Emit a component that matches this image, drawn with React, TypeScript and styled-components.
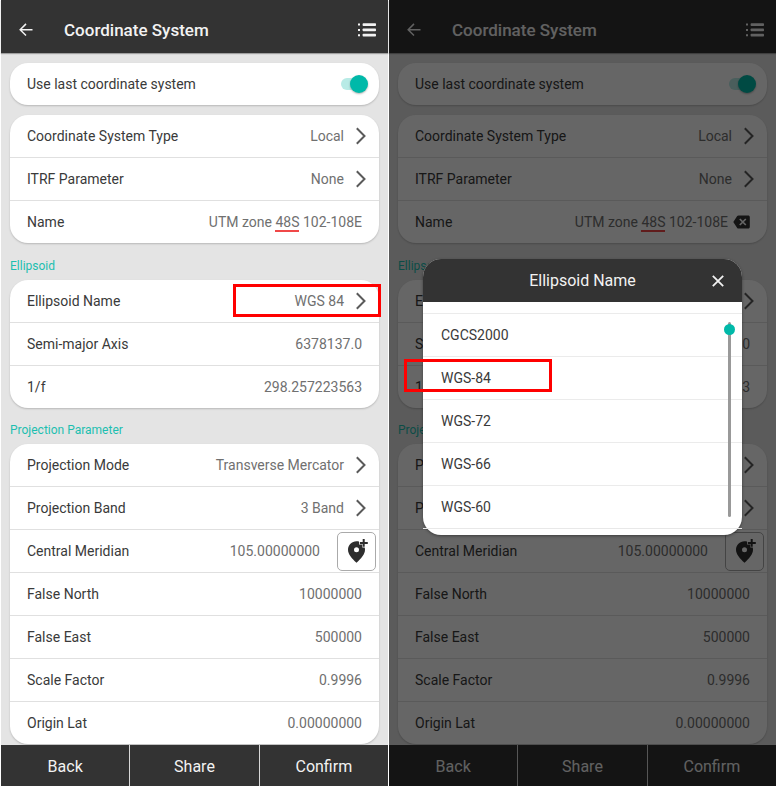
import React, { useId, useState } from "react";
import styled, { createGlobalStyle } from "styled-components";

const GlobalStyle = createGlobalStyle`
  *, *::before, *::after { box-sizing: border-box; }
  body {
    margin: 0;
    background: #fff;
    color: #3a3a3a;
    font-family: Roboto, "Liberation Sans", sans-serif;
    font-size: 14px;
  }
  button, input { font: inherit; color: inherit; }
  button { padding: 0; border: 0; background: none; cursor: pointer; }
  svg { display: block; flex: none; }
`;

const Screens = styled.main`
  display: grid;
  grid-template-columns: 1fr 1fr;
  gap: 1px;
  padding-left: 1px;
  min-height: 100vh;
`;

const Phone = styled.section`
  position: relative;
  display: flex;
  flex-direction: column;
  min-width: 0;
  background: #e4e4e4;
`;

const TopBar = styled.header`
  display: flex;
  align-items: center;
  height: 53px;
  padding: 7px 12px 0 18px;
  background: #333;
  color: #f2f2f2;
  box-shadow: 0 1px 1px rgba(0, 0, 0, 0.3);
`;

const Title = styled.h1`
  flex: 1;
  margin: 0 0 0 31px;
  font-size: 17px;
  line-height: 20px;
  font-weight: 500;
`;

const Content = styled.div`
  flex: 1;
  padding: 10px 9px 1px;
`;

const Card = styled.div`
  border-radius: 18px;
  background: #fff;
  box-shadow: 0 1px 2px rgba(0, 0, 0, 0.2);

  & + & { margin-top: 10px; }
`;

const SectionTitle = styled.h2`
  margin: 0;
  padding: 15px 0 6px;
  font-size: 12px;
  line-height: 16px;
  font-weight: 400;
  color: #1dbfb0;

  & ~ & { padding-top: 14px; }
`;

const Row = styled.div<{ $end?: number }>`
  position: relative;
  display: flex;
  align-items: center;
  min-height: 42px;
  padding: 0 ${(p) => p.$end ?? 17}px 0 17px;

  & + & {
    min-height: 43px;
    border-top: 1px solid #e0e0e0;
  }
`;

const Label = styled.label`
  flex: none;
  line-height: 20px;
`;

const Picker = styled.button`
  display: flex;
  align-items: center;
  gap: 12px;
  margin-left: auto;
  line-height: 20px;
  color: #707070;
`;

const Field = styled.input`
  flex: 1;
  min-width: 0;
  padding: 0;
  border: 0;
  outline: 0;
  background: none;
  text-align: right;
  line-height: 20px;
  color: #707070;
`;

const NameField = styled.div`
  flex: 1;
  outline: 0;
  text-align: right;
  line-height: 20px;
  white-space: nowrap;
  color: #707070;
`;

const Misspelled = styled.span`
  border-bottom: 2px solid #f04848;
`;

const ClearButton = styled.button`
  margin-left: 5px;
`;

const LocateButton = styled.button`
  display: grid;
  place-items: center;
  width: 39px;
  height: 39px;
  margin-left: 17px;
  border: 1px solid #aaa;
  border-radius: 5px;
  background: #fff;
`;

const Switch = styled.input`
  position: relative;
  appearance: none;
  width: 27px;
  height: 18px;
  margin: 0 0 0 auto;
  cursor: pointer;

  &::before {
    content: "";
    position: absolute;
    inset: 3px 3px 3px 0;
    border-radius: 6px;
    background: #c4c4c4;
  }
  &::after {
    content: "";
    position: absolute;
    top: 0;
    left: 0;
    width: 18px;
    height: 18px;
    border-radius: 50%;
    background: #f4f4f4;
    box-shadow: 0 1px 2px rgba(0, 0, 0, 0.3);
  }
  &:checked::before { background: #b8ebe6; }
  &:checked::after { left: 9px; background: #00b9a9; }
`;

const Highlight = styled.span<{ $dialog?: boolean }>`
  position: absolute;
  top: ${(p) => (p.$dialog ? 2 : 4)}px;
  ${(p) => (p.$dialog ? "left: -19px;" : "right: -2px;")}
  width: 148px;
  height: 33px;
  border: 3px solid #f00;
  pointer-events: none;
`;

const Footer = styled.footer`
  display: grid;
  grid-template-columns: repeat(3, 1fr);
  gap: 1px;
  height: 41px;
  background: #d8d8d8;
`;

const FooterButton = styled.button`
  padding-top: 3px;
  background: #333;
  color: #f2f2f2;
  font-size: 16px;
  line-height: 20px;
`;

const Scrim = styled.div`
  position: absolute;
  inset: 0;
  display: flex;
  align-items: center;
  padding: 7px 34px 0;
  background: rgba(0, 0, 0, 0.6);
`;

const Dialog = styled.div`
  flex: 1;
  border-radius: 18px;
  background: #fff;
  box-shadow: 0 1px 3px rgba(0, 0, 0, 0.4);
`;

const DialogHeader = styled.div`
  display: grid;
  grid-template-columns: 1fr auto 1fr;
  align-items: center;
  height: 43px;
  padding: 2px 18px 0;
  border-radius: 18px 18px 0 0;
  background: #333;
  color: #f2f2f2;
`;

const DialogTitle = styled.h2`
  grid-column: 2;
  margin: 0;
  font-size: 16px;
  line-height: 20px;
  font-weight: 400;
`;

const CloseButton = styled.button`
  justify-self: end;
`;

const DialogBody = styled.div`
  position: relative;
  padding: 11px 0 6px;
`;

const OptionList = styled.ul`
  margin: 0;
  padding: 0;
  list-style: none;
  border-bottom: 1px solid #e8e8e8;
`;

const OptionItem = styled.li`
  position: relative;
  border-top: 1px solid #ebebeb;
`;

const Option = styled.button`
  width: 100%;
  height: 42px;
  padding-left: 18px;
  text-align: left;
  line-height: 20px;
`;

const ScrollTrack = styled.div`
  position: absolute;
  top: 20px;
  right: 11px;
  bottom: 18px;
  width: 3px;
  border-radius: 2px;
  background: #999;

  &::before {
    content: "";
    position: absolute;
    top: 2px;
    left: -4px;
    width: 11px;
    height: 11px;
    border-radius: 50%;
    background: #00b9a9;
  }
`;

const BackIcon = () => (
  <svg width="14" height="14" viewBox="0 0 14 14" fill="none" stroke="currentColor" strokeWidth="1.5">
    <path d="M13.5 6.700H1.500M7 .9 1.200 6.700 7 12.500" />
  </svg>
);

const ListIcon = () => (
  <svg width="18" height="14" viewBox="0 0 18 14" fill="currentColor">
    <path d="M0 .6h2v2H0zM0 5.900h2v2H0zM0 11.200h2v2H0z" />
    <rect x="4.600" y=".2" width="13.400" height="2.800" rx=".8" />
    <rect x="4.600" y="5.500" width="13.400" height="2.800" rx=".8" />
    <rect x="4.600" y="10.800" width="13.400" height="2.800" rx=".8" />
  </svg>
);

const ChevronIcon = () => (
  <svg width="10" height="18" viewBox="0 0 10 18" fill="none" stroke="#5a5a5a" strokeWidth="2">
    <path d="M.8 1.200 8.500 9 .8 16.800" />
  </svg>
);

const ClearIcon = () => (
  <svg width="17" height="14" viewBox="0 0 17 14">
    <path d="M5.5.4h9.7c.9 0 1.6.6 1.6 1.5v10.2c0 .9-.7 1.5-1.6 1.5H5.5c-.6 0-1-.2-1.3-.7L.3 7l3.900-5.900c.3-.5.7-.7 1.300-.7z" fill="#333" />
    <path d="m6.800 4 6 6m0-6-6 6" stroke="#fff" strokeWidth="1.7" />
  </svg>
);

const PinIcon = () => (
  <svg width="22" height="24" viewBox="0 0 22 24">
    <path
      fillRule="evenodd"
      fill="#2e2e2e"
      d="M10.500 2.200c.9 0 1.700.1 2.500.4v2.900h3.300v3.100h2.400c.2.700.3 1.400.3 2.200 0 4.500-3.800 8.700-8.500 13-4.700-4.300-8.500-8.500-8.500-13 0-5 3.800-8.600 8.500-8.600zM10.500 8.200a2.500 2.500 0 1 0 0 5 2.500 2.500 0 0 0 0-5z"
    />
    <path d="M17.700 0v7.800M13.800 3.900h8" stroke="#2e2e2e" strokeWidth="2" />
  </svg>
);

const CloseIcon = () => (
  <svg width="12" height="12" viewBox="0 0 12 12" stroke="currentColor" strokeWidth="1.8">
    <path d="m.8.8 10.400 10.400M11.200.8.8 11.200" />
  </svg>
);

type PickerRowProps = { label: string; value: string; highlighted?: boolean };

function PickerRow({ label, value, highlighted }: PickerRowProps) {
  const id = useId();
  return (
    <Row $end={13}>
      <Label htmlFor={id}>{label}</Label>
      <Picker id={id} type="button">
        {value}
        <ChevronIcon />
      </Picker>
      {highlighted && <Highlight />}
    </Row>
  );
}

type FieldRowProps = { label: string; value: string; locate?: boolean };

function FieldRow({ label, value, locate }: FieldRowProps) {
  const id = useId();
  return (
    <Row $end={locate ? 3 : 17}>
      <Label htmlFor={id}>{label}</Label>
      <Field id={id} defaultValue={value} inputMode="decimal" />
      {locate && (
        <LocateButton type="button" aria-label="Use current position">
          <PinIcon />
        </LocateButton>
      )}
    </Row>
  );
}

function NameRow({ clearable }: { clearable?: boolean }) {
  const id = useId();
  return (
    <Row $end={17}>
      <Label as="span" id={id}>Name</Label>
      <NameField role="textbox" aria-labelledby={id} contentEditable suppressContentEditableWarning spellCheck={false}>
        UTM zone <Misspelled>48S</Misspelled> 102-108E
      </NameField>
      {clearable && (
        <ClearButton type="button" aria-label="Clear name">
          <ClearIcon />
        </ClearButton>
      )}
    </Row>
  );
}

const ellipsoids = ["CGCS2000", "WGS-84", "WGS-72", "WGS-66", "WGS-60"];

function EllipsoidDialog() {
  const id = useId();
  return (
    <Scrim>
      <Dialog role="dialog" aria-labelledby={id}>
        <DialogHeader>
          <DialogTitle id={id}>Ellipsoid Name</DialogTitle>
          <CloseButton type="button" aria-label="Close">
            <CloseIcon />
          </CloseButton>
        </DialogHeader>
        <DialogBody>
          <OptionList>
            {ellipsoids.map((name) => (
              <OptionItem key={name}>
                <Option type="button">{name}</Option>
                {name === "WGS-84" && <Highlight $dialog />}
              </OptionItem>
            ))}
          </OptionList>
          <ScrollTrack />
        </DialogBody>
      </Dialog>
    </Scrim>
  );
}

function CoordinateScreen({ picking }: { picking?: boolean }) {
  const switchId = useId();
  const [useLast, setUseLast] = useState(true);
  return (
    <Phone>
      <TopBar>
        <button type="button" aria-label="Go back">
          <BackIcon />
        </button>
        <Title>Coordinate System</Title>
        <button type="button" aria-label="Menu">
          <ListIcon />
        </button>
      </TopBar>
      <Content>
        <Card>
          <Row $end={11}>
            <Label htmlFor={switchId}>Use last coordinate system</Label>
            <Switch
              id={switchId}
              type="checkbox"
              role="switch"
              checked={useLast}
              onChange={(e) => setUseLast(e.target.checked)}
            />
          </Row>
        </Card>
        <Card>
          <PickerRow label="Coordinate System Type" value="Local" />
          <PickerRow label="ITRF Parameter" value="None" />
          <NameRow clearable={picking} />
        </Card>
        <SectionTitle>Ellipsoid</SectionTitle>
        <Card>
          <PickerRow label="Ellipsoid Name" value="WGS 84" highlighted={!picking} />
          <FieldRow label="Semi-major Axis" value="6378137.0" />
          <FieldRow label="1/f" value="298.257223563" />
        </Card>
        <SectionTitle>Projection Parameter</SectionTitle>
        <Card>
          <PickerRow label="Projection Mode" value="Transverse Mercator" />
          <PickerRow label="Projection Band" value="3 Band" />
          <FieldRow label="Central Meridian" value="105.00000000" locate />
          <FieldRow label="False North" value="10000000" />
          <FieldRow label="False East" value="500000" />
          <FieldRow label="Scale Factor" value="0.9996" />
          <FieldRow label="Origin Lat" value="0.00000000" />
        </Card>
      </Content>
      <Footer>
        <FooterButton type="button">Back</FooterButton>
        <FooterButton type="button">Share</FooterButton>
        <FooterButton type="button">Confirm</FooterButton>
      </Footer>
      {picking && <EllipsoidDialog />}
    </Phone>
  );
}

export default function App() {
  return (
    <>
      <GlobalStyle />
      <Screens>
        <CoordinateScreen />
        <CoordinateScreen picking />
      </Screens>
    </>
  );
}
